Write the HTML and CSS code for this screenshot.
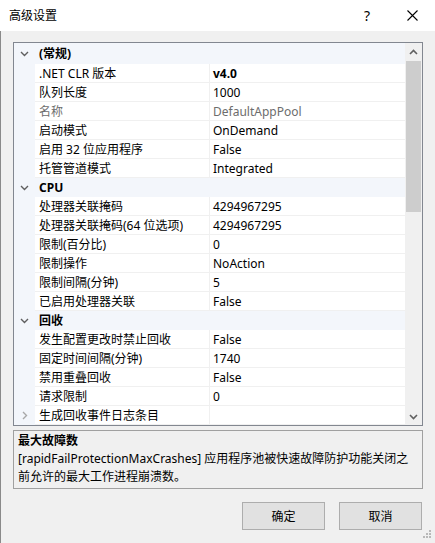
FILE: index.html
```html
<!DOCTYPE html>
<html lang="zh-CN">
<head>
    <meta charset="UTF-8">
    <title>高级设置</title>
    <link rel="stylesheet" href="styles.css">
</head>
<body>
<div class="dialog">
    <!-- Title bar -->
    <div class="titlebar">
        <span class="title">高级设置</span>
        <span class="tb-btn help">?</span>
        <span class="tb-btn close">
            <svg width="11" height="11" viewBox="0 0 11 11"><path d="M0.5 0.5 L10.5 10.5 M10.5 0.5 L0.5 10.5" stroke="#000" stroke-width="1.1" fill="none"/></svg>
        </span>
    </div>

    <div class="content">
        <!-- Property grid -->
        <div class="grid">
            <div class="rows">
                <div class="cat first">
                    <span class="toggle"><svg width="9" height="6" viewBox="0 0 9 6"><path d="M1 1 L4.5 4.5 L8 1" class="chev"/></svg></span>
                    <span class="cat-name">(常规)</span>
                </div>
                <div class="row"><span class="gutter"></span><span class="name">.NET CLR 版本</span><span class="value strong">v4.0</span></div>
                <div class="row"><span class="gutter"></span><span class="name">队列长度</span><span class="value">1000</span></div>
                <div class="row readonly"><span class="gutter"></span><span class="name">名称</span><span class="value">DefaultAppPool</span></div>
                <div class="row"><span class="gutter"></span><span class="name">启动模式</span><span class="value">OnDemand</span></div>
                <div class="row"><span class="gutter"></span><span class="name">启用 32 位应用程序</span><span class="value">False</span></div>
                <div class="row"><span class="gutter"></span><span class="name">托管管道模式</span><span class="value">Integrated</span></div>

                <div class="cat">
                    <span class="toggle"><svg width="9" height="6" viewBox="0 0 9 6"><path d="M1 1 L4.5 4.5 L8 1" class="chev"/></svg></span>
                    <span class="cat-name">CPU</span>
                </div>
                <div class="row"><span class="gutter"></span><span class="name">处理器关联掩码</span><span class="value">4294967295</span></div>
                <div class="row"><span class="gutter"></span><span class="name">处理器关联掩码(64 位选项)</span><span class="value">4294967295</span></div>
                <div class="row"><span class="gutter"></span><span class="name">限制(百分比)</span><span class="value">0</span></div>
                <div class="row"><span class="gutter"></span><span class="name">限制操作</span><span class="value">NoAction</span></div>
                <div class="row"><span class="gutter"></span><span class="name">限制间隔(分钟)</span><span class="value">5</span></div>
                <div class="row"><span class="gutter"></span><span class="name">已启用处理器关联</span><span class="value">False</span></div>

                <div class="cat">
                    <span class="toggle"><svg width="9" height="6" viewBox="0 0 9 6"><path d="M1 1 L4.5 4.5 L8 1" class="chev"/></svg></span>
                    <span class="cat-name">回收</span>
                </div>
                <div class="row"><span class="gutter"></span><span class="name">发生配置更改时禁止回收</span><span class="value">False</span></div>
                <div class="row"><span class="gutter"></span><span class="name">固定时间间隔(分钟)</span><span class="value">1740</span></div>
                <div class="row"><span class="gutter"></span><span class="name">禁用重叠回收</span><span class="value">False</span></div>
                <div class="row"><span class="gutter"></span><span class="name">请求限制</span><span class="value">0</span></div>
                <div class="row">
                    <span class="gutter"><svg width="6" height="9" viewBox="0 0 6 9"><path d="M1 1 L4.5 4.5 L1 8" class="chev light"/></svg></span>
                    <span class="name">生成回收事件日志条目</span><span class="value"></span>
                </div>
            </div>

            <div class="scrollbar">
                <div class="sb-btn up"><svg width="9" height="6" viewBox="0 0 9 6"><path d="M1 5 L4.5 1.5 L8 5" class="arrow"/></svg></div>
                <div class="sb-track"><div class="sb-thumb"></div></div>
                <div class="sb-btn down"><svg width="9" height="6" viewBox="0 0 9 6"><path d="M1 1 L4.5 4.5 L8 1" class="arrow"/></svg></div>
            </div>
        </div>

        <!-- Description -->
        <div class="desc">
            <div class="desc-title">最大故障数</div>
            <div class="desc-text">[rapidFailProtectionMaxCrashes] 应用程序池被快速故障防护功能关闭之前允许的最大工作进程崩溃数。</div>
        </div>

        <div class="buttons">
            <button class="btn">确定</button>
            <button class="btn">取消</button>
        </div>
    </div>

    <svg class="grip" width="9" height="9" viewBox="0 0 9 9">
        <rect x="6" y="0" width="2" height="2"/>
        <rect x="3" y="3" width="2" height="2"/>
        <rect x="6" y="3" width="2" height="2"/>
        <rect x="0" y="6" width="2" height="2"/>
        <rect x="3" y="6" width="2" height="2"/>
        <rect x="6" y="6" width="2" height="2"/>
    </svg>
</div>
</body>
</html>
```

FILE: styles.css
```css
* {
    box-sizing: border-box;
}

body {
    margin: 0;
    font-family: "Noto Sans", "Noto Sans CJK SC", sans-serif;
    font-size: 12px;
    color: #000;
    background: #f0f0f0;
}

.dialog {
    position: relative;
    width: 435px;
    height: 543px;
    display: flex;
    flex-direction: column;
}

/* Title bar */
.titlebar {
    height: 31px;
    background: #fff;
    display: flex;
    align-items: center;
    flex-shrink: 0;
}

.title {
    flex: 1;
    padding-left: 9px;
    line-height: 31px;
}

.tb-btn {
    height: 31px;
    display: flex;
    align-items: center;
    justify-content: center;
}

.help {
    width: 44px;
    font-size: 14px;
}

.close {
    width: 46px;
}

/* Body */
.content {
    flex: 1;
    background: #f0f0f0;
    border-left: 1px solid #8a8a8a;
    border-bottom: 1px solid #7a7a7a;
    padding: 11px 12px 13px 12px;
    display: flex;
    flex-direction: column;
}

/* Property grid */
.grid {
    height: 384px;
    border: 1px solid #828790;
    background: #fff;
    display: flex;
    flex-shrink: 0;
}

.rows {
    flex: 1;
    overflow: hidden;
}

.cat {
    height: 19px;
    background: #f3f6fb;
    display: flex;
    align-items: center;
}

.cat.first {
    height: 21px;
}

.toggle {
    width: 21px;
    display: flex;
    justify-content: center;
    align-items: center;
}

.cat-name {
    padding: 1px 0 0 4px;
    font-weight: bold;
    line-height: 18px;
}

.chev {
    fill: none;
    stroke: #5f5f5f;
    stroke-width: 1.4;
}

.chev.light {
    stroke: #a8a8a8;
}

.row {
    height: 19px;
    display: flex;
}

.gutter {
    width: 21px;
    background: #f3f6fb;
    display: flex;
    justify-content: center;
    align-items: center;
    flex-shrink: 0;
}

.name,
.value {
    padding-top: 1px;
    line-height: 17px;
    border-bottom: 1px solid #f0f0f0;
    white-space: nowrap;
    overflow: hidden;
}

.name {
    width: 175px;
    padding-left: 4px;
    border-right: 1px solid #f0f0f0;
    flex-shrink: 0;
}

.value {
    flex: 1;
    padding-left: 3px;
}

.value.strong {
    font-weight: bold;
}

.readonly .name,
.readonly .value {
    color: #6d6d6d;
}

/* Scrollbar */
.scrollbar {
    width: 17px;
    background: #f0f0f0;
    display: flex;
    flex-direction: column;
    flex-shrink: 0;
}

.sb-btn {
    height: 17px;
    display: flex;
    justify-content: center;
    align-items: center;
}

.sb-btn.up {
    height: 18px;
}

.sb-track {
    flex: 1;
}

.sb-thumb {
    height: 151px;
    margin: 0 1px 0 1px;
    background: #cdcdcd;
}

.arrow {
    fill: none;
    stroke: #606060;
    stroke-width: 1.6;
}

/* Description */
.desc {
    height: 59px;
    margin-top: 4px;
    border: 1px solid #a0a0a0;
    padding: 2px 4px 0 4px;
    flex-shrink: 0;
}

.desc-title {
    font-weight: bold;
    line-height: 16px;
}

.desc-text {
    margin-top: 1px;
    line-height: 18px;
}

/* Buttons */
.buttons {
    margin-top: 13px;
    display: flex;
    justify-content: flex-end;
    gap: 14px;
    padding-right: 1px;
}

.btn {
    width: 83px;
    height: 28px;
    background: #e1e1e1;
    border: 1px solid #adadad;
    font-family: inherit;
    font-size: 12px;
    color: #000;
    padding: 0;
}

.grip {
    position: absolute;
    right: 3px;
    bottom: 4px;
    fill: #b8b8b8;
}
```
